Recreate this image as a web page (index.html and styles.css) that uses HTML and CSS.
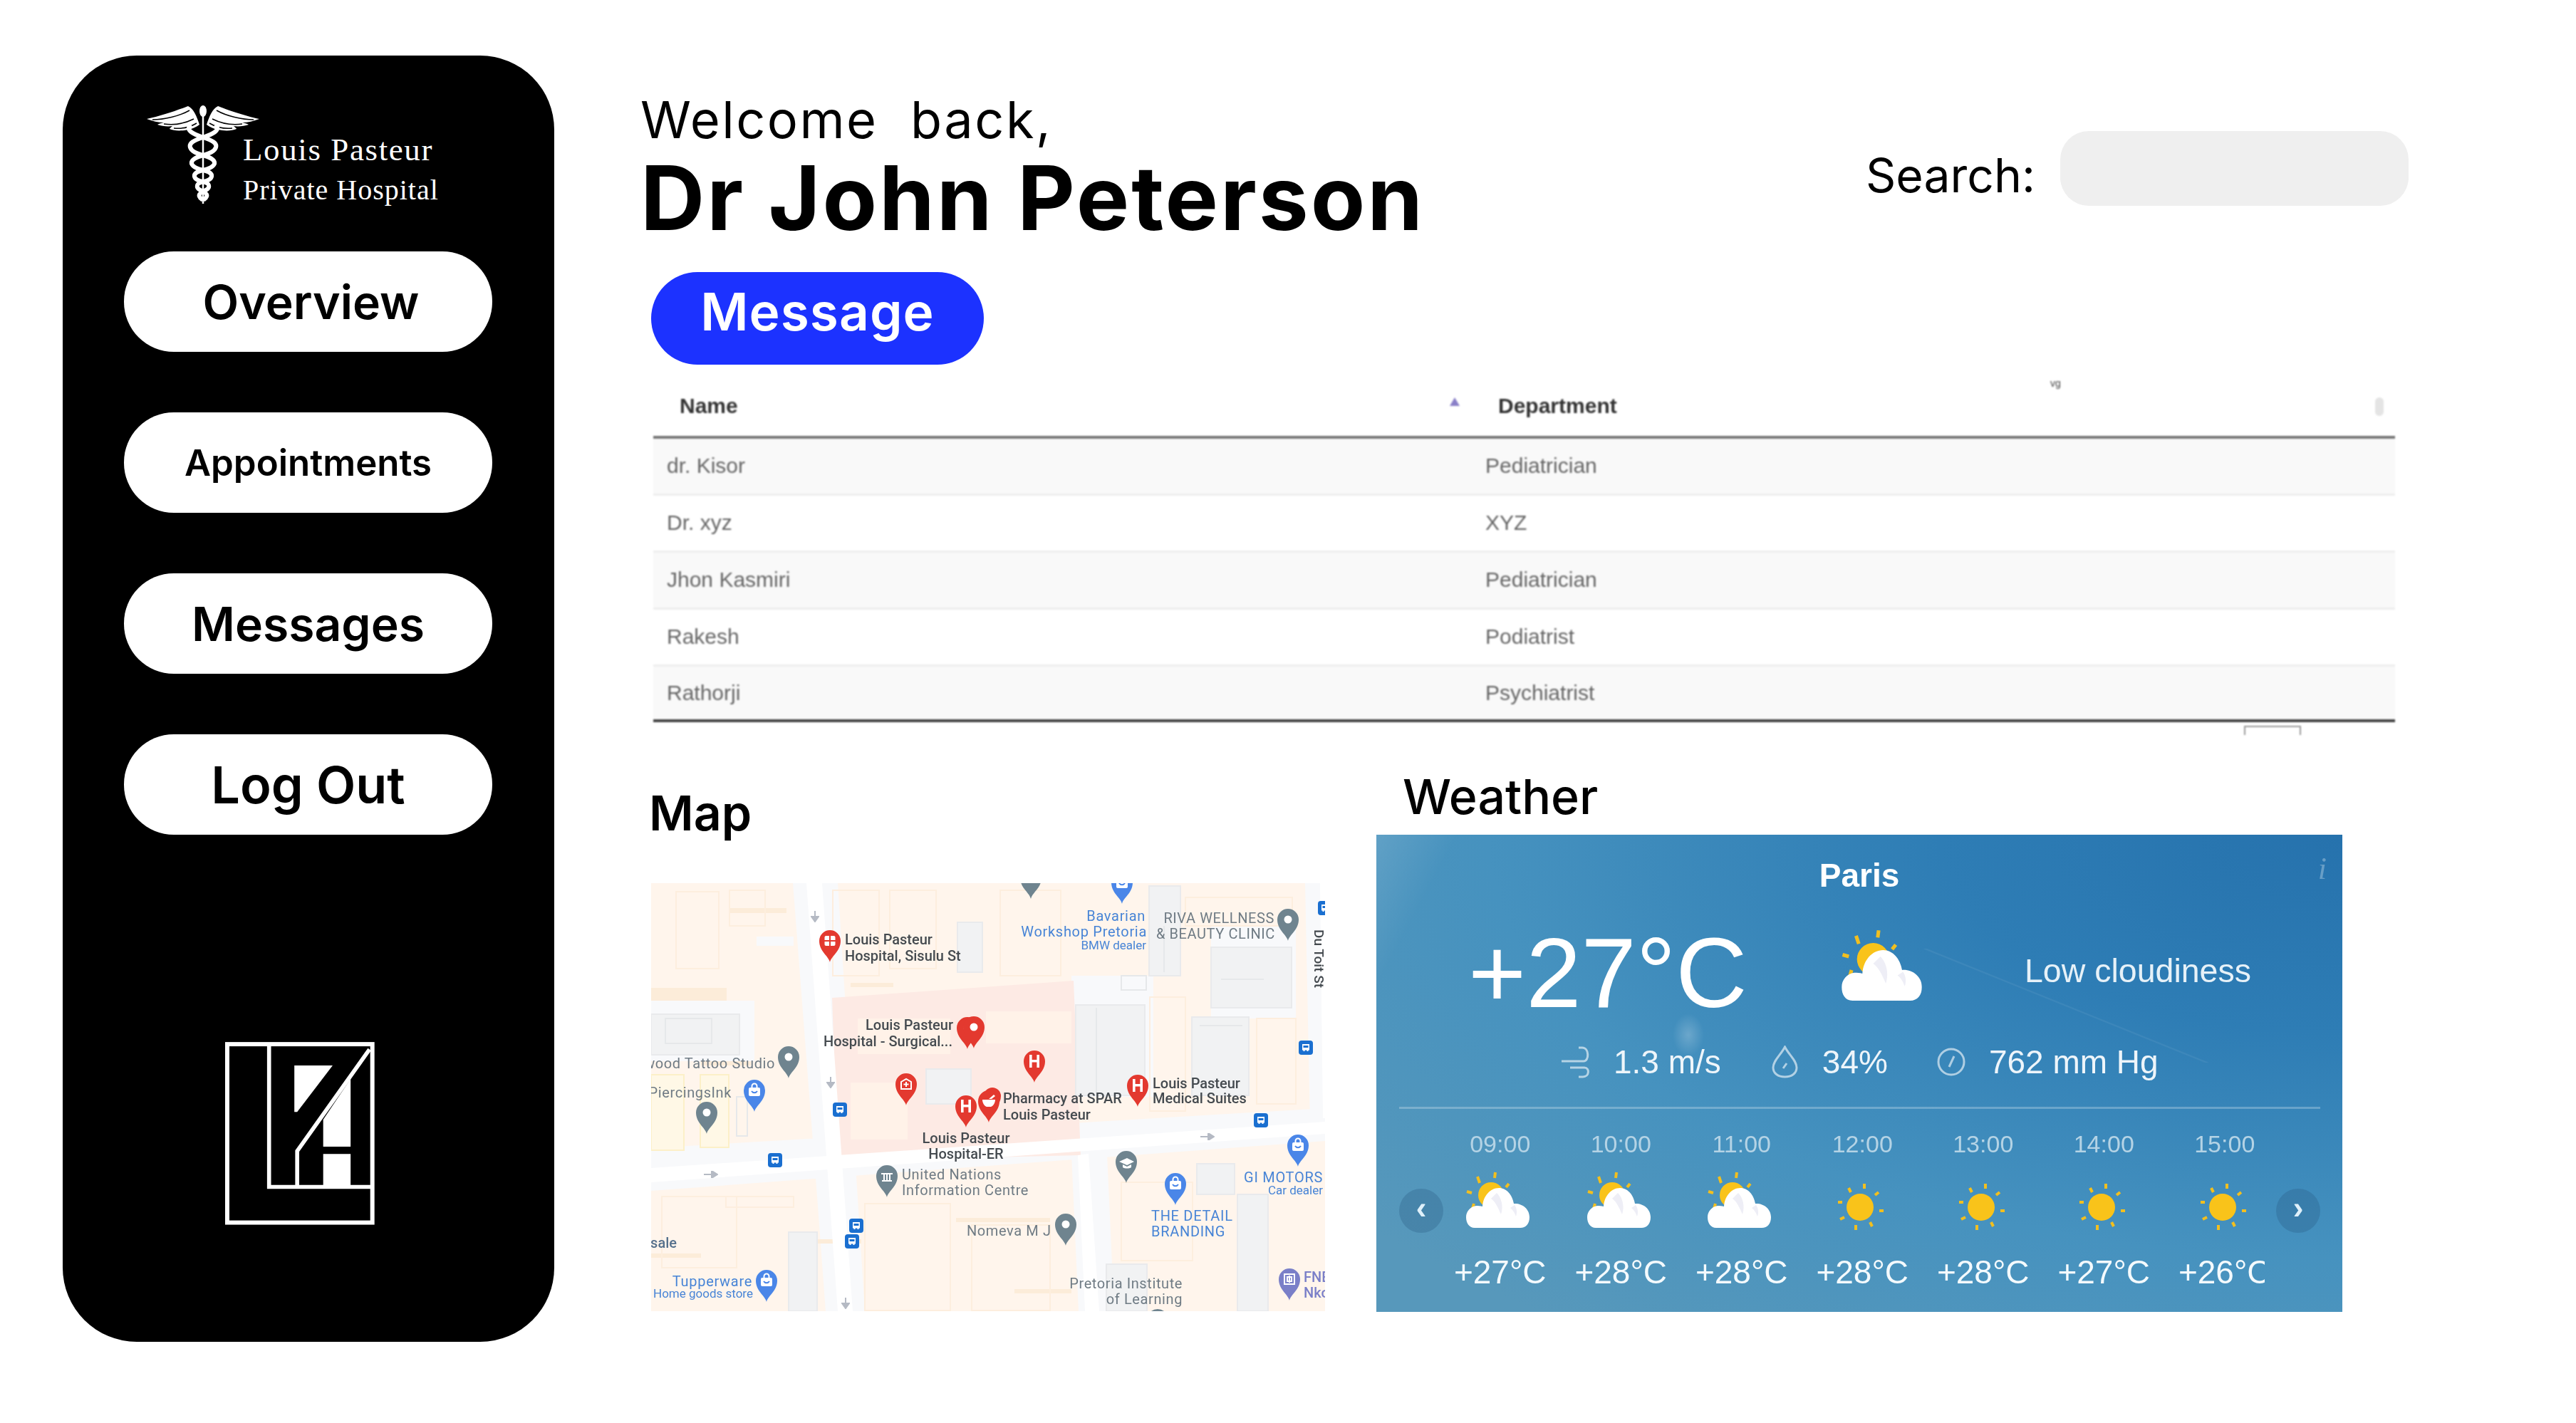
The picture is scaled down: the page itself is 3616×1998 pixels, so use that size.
FILE: index.html
```html
<!DOCTYPE html>
<html lang="en">
<head>
<meta charset="utf-8">
<title>Louis Pasteur Private Hospital</title>
<link rel="stylesheet" href="styles.css">
</head>
<body>
<svg class="defs" width="0" height="0" aria-hidden="true">
  <defs>
    <path id="drop-shape" d="M15 45C13 36 0 30 0 15A15 15 0 0 1 30 15C30 30 17 36 15 45Z"/>
    <symbol id="pin-dot" viewBox="0 0 30 45"><use href="#drop-shape"/><circle class="gw" cx="15" cy="15" r="5.5"/></symbol>
    <symbol id="pin-h" viewBox="0 0 30 45"><use href="#drop-shape"/><path class="gw" d="M8 6h3.6v7h6.8V6H22v18h-3.6v-7.6h-6.8V24H8z"/></symbol>
    <symbol id="pin-hosp" viewBox="0 0 30 45"><use href="#drop-shape"/><rect class="gw" x="7.500" y="8" width="15" height="14" rx="2"/><path class="gl" d="M7 15h16M15 8v14"/></symbol>
    <symbol id="pin-plus" viewBox="0 0 30 45"><use href="#drop-shape"/><path class="gl-w" d="M8 12l7-4 7 4v10H8zM15 12v7M11.500 15.500h7"/></symbol>
    <symbol id="pin-bag" viewBox="0 0 30 45"><use href="#drop-shape"/><rect class="gw" x="7" y="11" width="16" height="12" rx="2"/><path class="gl-w" d="M11.500 11V9a3.500 3.500 0 0 1 7 0v2"/><path class="gl" d="M11 16c2 3 6 3 8 0"/></symbol>
    <symbol id="pin-mortar" viewBox="0 0 30 45"><use href="#drop-shape"/><path class="gw" d="M6 13h18c0 5-3 9-6 10h-6c-3-1-6-5-6-10zM15 12l7-6 2 2-5 4z"/></symbol>
    <symbol id="pin-un" viewBox="0 0 30 45"><use href="#drop-shape"/><path class="gl-w" d="M7 12h16M8 22h14M11 13v8M19 13v8M15 13v8"/></symbol>
    <symbol id="pin-grad" viewBox="0 0 30 45"><use href="#drop-shape"/><path class="gw" d="M5 15l11-5 10 5-10 5zM10 19v4c3 2 9 2 12 0v-4l-6 3z"/></symbol>
    <symbol id="pin-bank" viewBox="0 0 30 45"><use href="#drop-shape"/><path class="gl-w" d="M8 8h14v14H8zM12 12h6v6h-6zM15 10v10"/></symbol>
    <symbol id="bus" viewBox="0 0 20 20"><rect class="bus-bg" width="20" height="20" rx="4"/><path class="gw" d="M5 5h10v8.500h-1.500V15h-2v-1.500h-3V15h-2v-1.500H5zM6.500 7v3h7V7z"/></symbol>
    <symbol id="arrow-down" viewBox="0 0 12 16"><path class="arrow" d="M6 0v9M1 8h10L6 15z"/></symbol>
    <symbol id="arrow-right" viewBox="0 0 20 10"><path class="arrow" d="M0 5h12M11 0v10l8-5z"/></symbol>
    <symbol id="partly" viewBox="0 0 89 79">
      <g class="ray"><path d="M16 7l3 9M41 1l-1 8M60 17l-4 5M1 28l7 2M9 52l2-7"/></g>
      <circle class="sun" cx="35" cy="33" r="18"/>
      <path class="cloud" d="M12 79C4 79 0 72 0 64C0 56 6 49 14 48C17 48 20 48 23 49C24 34 34 23 46 23C57 23 65 33 67 45C78 44 89 52 89 64C89 73 84 79 76 79Z"/>
      <path class="cloud-shade" d="M43 30c6 6 10 18 6 30-4-9-8-18-14-22zM68 47c3 4 4 10 2 16-2-5-4-9-8-12z"/>
    </symbol>
    <symbol id="sunny" viewBox="0 0 68 69">
      <g class="ray"><path d="M39 2v7M17 8l3 6M59 14l-5 4M2 28h6M60 40h6M5 52l6-3M27 60v7M47 56l3 6"/></g>
      <circle class="sun" cx="33" cy="35" r="19"/>
    </symbol>
  </defs>
</svg>

<div class="page">
  <aside class="sidebar">
    <div class="brand">
      <svg class="caduceus" viewBox="0 0 160 140" aria-hidden="true">
        <g id="half-wing">
          <path class="wing" d="M74 28C70 16 66 6 58 2 48 6 20 16 0 20c8 3 16 5 24 5-4 1-8 2-9 3 6 2 14 3 21 2-2 2-4 3-4 4 6 3 18 3 26 1 6-1 12-4 16-7z"/>
          <path class="wing-line" d="M60 8C46 16 24 21 8 21M66 20C52 27 38 29 24 27M70 26C60 32 48 34 38 33"/>
        </g>
        <g transform="translate(158 0) scale(-1 1)">
          <use href="#half-wing"/>
        </g>
        <ellipse class="snake-fill" cx="79" cy="9" rx="5" ry="8"/>
        <path class="staff" d="M79 14V139"/>
        <g id="snake">
          <path class="snake" d="M62 28C52 36 68 42 79 46C92 50 99 54 97 60C95 66 88 68 79 71C68 74 62 78 63 83C65 88 72 90 79 92C88 94 92 97 91 101C90 105 85 107 79 108C72 110 70 112 71 116C72 119 76 120 79 122C84 124 85 127 84 129C83 132 80 133 79 134"/>
        </g>
        <g transform="translate(158 0) scale(-1 1)"><use href="#snake"/></g>
      </svg>
      <div class="brand-text">
        <div class="brand-line1">Louis Pasteur</div>
        <div class="brand-line2">Private Hospital</div>
      </div>
    </div>
    <nav class="nav">
      <a class="nav-btn nav-overview">Overview</a>
      <a class="nav-btn nav-appointments">Appointments</a>
      <a class="nav-btn nav-messages">Messages</a>
      <a class="nav-btn nav-logout">Log Out</a>
    </nav>
    <svg class="lp-mark" viewBox="167 184 633 774" aria-hidden="true">
      <rect class="lp-line" x="176" y="193" width="614" height="755"/>
      <path class="lp-line lp-thin" d="M353 193V797H790"/>
      <path class="lp-line lp-thin" d="M778 215L472 645V797"/>
      <path class="lp-fill" d="M460 283H622L472 480H460Z"/>
      <path class="lp-fill" d="M582 512L698 340V627H582ZM582 658H698V797H582Z"/>
    </svg>
  </aside>

  <main class="content">
    <header class="head">
      <div class="greet">
        <div class="welcome">Welcome&nbsp; back,</div>
        <h1 class="doctor">Dr John Peterson</h1>
      </div>
      <div class="search">
        <label class="search-label">Search:</label>
        <div class="search-box"></div>
      </div>
    </header>
    <button class="msg-btn">Message</button>

    <div class="table-wrap">
      <span class="stray">vg</span>
      <table class="doctors">
        <colgroup><col class="col-name"><col class="col-dept"></colgroup>
        <thead>
          <tr><th class="th-name">Name<span class="sort-up"></span></th><th class="th-dept">Department<span class="sort-both"></span></th></tr>
        </thead>
        <tbody>
          <tr><td>dr. Kisor</td><td>Pediatrician</td></tr>
          <tr><td>Dr. xyz</td><td>XYZ</td></tr>
          <tr><td>Jhon Kasmiri</td><td>Pediatrician</td></tr>
          <tr><td>Rakesh</td><td>Podiatrist</td></tr>
          <tr><td>Rathorji</td><td>Psychiatrist</td></tr>
        </tbody>
      </table>
      <div class="pager"><span class="pager-box"></span></div>
    </div>

    <section class="lower">
      <div class="map-col">
        <h2 class="section-title map-title">Map</h2>
        <svg class="map" viewBox="0 0 946 601" role="img" aria-label="Map">
          <rect class="m-base" width="946" height="601"/>
          <!-- pavements -->
          <path class="m-walk" d="M199 0H262L300 601H245L233 440 199 0ZM590 380H640L650 601H600ZM918 0H946V340H925ZM0 372L946 316V362L0 432ZM590 130H705V300H590ZM786 60H905V190H786ZM0 165H145V250H0ZM148 75H200V88H148Z"/>
          <path class="m-accent" d="M0 147H106V165H0ZM110 35H190V42H110ZM280 140H340V146H280ZM0 520H70V526H0ZM410 380H470V386H410ZM220 500H295V506H220ZM428 470H560V476H428ZM70 250H140V256H70ZM510 570H590V576H510Z"/>
          <path class="m-lines" d="M35 12H95V120H35ZM110 10H160V60H110ZM255 10H320V130H255ZM335 10H400V120H335ZM490 10H575V130H490ZM15 440H120V540H15ZM105 440H200V455H105ZM300 450H420V600H300ZM450 480H560V600H450ZM660 420H760V530H660ZM750 20H900V60H750ZM700 160H750V320H700ZM850 190H905V310H850ZM290 360H410V370H290Z"/>
          <path class="m-yellow" d="M0 269H46V375H0ZM69 269H109V371H69Z"/>
          <!-- hospital grounds -->
          <path class="m-hosp" d="M254 161L593 137 603 382 262 390Z"/>
          <path class="m-hosp-in" d="M290 190H420V240H290ZM470 180H590V225H470ZM280 280H360V360H280Z"/>
          <!-- buildings -->
          <path class="m-bld" d="M596 171H693V298H596ZM759 188H839V298H759ZM699 4H743V130H699ZM786 90H899V175H786ZM0 184H124V241H0ZM386 261H449V310H386ZM823 437H866V601H823ZM639 535H696V601H639ZM766 394H819V437H766ZM193 490H233V601H193ZM430 55H465V125H430Z"/>
          <path class="m-bld-line" d="M20 190H85V225H20ZM625 175V295M770 200H830M720 60V125M120 300H135V355H120ZM800 135H860M660 130H695V150H660Z"/>
          <!-- roads -->
          <path class="m-road" d="M218 0H240L283 601H262ZM599 382L614 380 629 601H609ZM939 0H946V330H943ZM0 400L946 335V352L0 420Z"/>
          <!-- arrows -->
          <use href="#arrow-down" x="224" y="39" width="12" height="16"/>
          <use href="#arrow-down" x="246" y="272" width="12" height="16"/>
          <use href="#arrow-down" x="267" y="582" width="12" height="16"/>
          <use href="#arrow-right" x="74" y="404" width="20" height="10"/>
          <use href="#arrow-right" x="771" y="351" width="20" height="10"/>
          <!-- transit -->
          <use href="#bus" x="255" y="308" width="20" height="20"/>
          <use href="#bus" x="164" y="379" width="20" height="20"/>
          <use href="#bus" x="278" y="471" width="20" height="20"/>
          <use href="#bus" x="272" y="493" width="20" height="20"/>
          <use href="#bus" x="909" y="221" width="20" height="20"/>
          <use href="#bus" x="846" y="323" width="20" height="20"/>
          <use href="#bus" x="936" y="25" width="20" height="20"/>
          <!-- pins -->
          <g class="p-red">
            <use href="#pin-hosp" x="236" y="66" width="30" height="45"/>
            <use href="#pin-dot" x="429" y="188" width="30" height="45"/>
            <use href="#pin-dot" x="438" y="187" width="30" height="45"/>
            <use href="#pin-plus" x="343" y="267" width="30" height="45"/>
            <use href="#pin-dot" x="467" y="287" width="24" height="36"/>
            <use href="#pin-h" x="427" y="298" width="30" height="45"/>
            <use href="#pin-mortar" x="459" y="291" width="30" height="45"/>
            <use href="#pin-h" x="523" y="235" width="30" height="45"/>
            <use href="#pin-h" x="668" y="269" width="30" height="45"/>
          </g>
          <g class="p-gray">
            <use href="#pin-dot" x="178" y="229" width="30" height="45"/>
            <use href="#pin-dot" x="63" y="307" width="30" height="45"/>
            <use href="#pin-un" x="316" y="396" width="30" height="45"/>
            <use href="#pin-dot" x="518" y="-23" width="30" height="45"/>
            <use href="#pin-dot" x="879" y="36" width="30" height="45"/>
            <use href="#pin-grad" x="652" y="376" width="30" height="45"/>
            <use href="#pin-dot" x="567" y="464" width="30" height="45"/>
            <use href="#pin-dot" x="696" y="598" width="30" height="45"/>
          </g>
          <g class="p-blue">
            <use href="#pin-bag" x="130" y="276" width="30" height="45"/>
            <use href="#pin-bag" x="147" y="543" width="30" height="45"/>
            <use href="#pin-bag" x="646" y="-16" width="30" height="45"/>
            <use href="#pin-bag" x="721" y="407" width="30" height="45"/>
            <use href="#pin-bag" x="893" y="353" width="30" height="45"/>
          </g>
          <g class="p-purple"><use href="#pin-bank" x="881" y="541" width="30" height="45"/></g>
          <!-- labels -->
          <text class="ml ml-dark" x="272" y="86">Louis Pasteur</text>
          <text class="ml ml-dark" x="272" y="109">Hospital, Sisulu St</text>
          <text class="ml ml-dark ml-end" x="424" y="206">Louis Pasteur</text>
          <text class="ml ml-dark ml-end" x="423" y="229">Hospital -  Surgical...</text>
          <text class="ml ml-gray ml-end" x="174" y="260">Hollywood Tattoo Studio</text>
          <text class="ml ml-gray ml-end" x="113" y="301">PiercingsInk</text>
          <text class="ml ml-slate ml-end" x="36" y="512">Wholesale</text>
          <text class="ml ml-blue ml-end" x="142" y="566">Tupperware</text>
          <text class="ml ml-blue ml-small ml-end" x="143" y="582">Home goods store</text>
          <text class="ml ml-dark ml-mid" x="442" y="365">Louis Pasteur</text>
          <text class="ml ml-dark ml-mid" x="442" y="387">Hospital-ER</text>
          <text class="ml ml-gray" x="352" y="416">United Nations</text>
          <text class="ml ml-gray" x="352" y="438">Information Centre</text>
          <text class="ml ml-gray" x="443" y="495">Nomeva M J</text>
          <text class="ml ml-blue ml-end" x="694" y="53">Bavarian</text>
          <text class="ml ml-blue ml-end" x="696" y="75">Workshop Pretoria</text>
          <text class="ml ml-blue ml-small ml-end" x="695" y="93">BMW dealer</text>
          <text class="ml ml-gray ml-end" x="875" y="56">RIVA WELLNESS</text>
          <text class="ml ml-gray ml-end" x="876" y="78">&amp; BEAUTY CLINIC</text>
          <text class="ml ml-dark ml-rot" transform="translate(931 65) rotate(90)">Du Toit St</text>
          <text class="ml ml-dark" x="494" y="309">Pharmacy at SPAR</text>
          <text class="ml ml-dark" x="494" y="332">Louis Pasteur</text>
          <text class="ml ml-dark" x="704" y="288">Louis Pasteur</text>
          <text class="ml ml-dark" x="704" y="309">Medical Suites</text>
          <text class="ml ml-blue ml-end" x="943" y="420">GI MOTORS</text>
          <text class="ml ml-blue ml-small ml-end" x="943" y="437">Car dealer</text>
          <text class="ml ml-blue" x="702" y="474">THE DETAIL</text>
          <text class="ml ml-blue" x="702" y="496">BRANDING</text>
          <text class="ml ml-gray ml-end" x="746" y="569">Pretoria Institute</text>
          <text class="ml ml-gray ml-end" x="746" y="591">of Learning</text>
          <text class="ml ml-purple" x="916" y="560">FNB</text>
          <text class="ml ml-purple" x="916" y="582">Nkomo</text>
        </svg>
      </div>

      <div class="weather-col">
        <h2 class="section-title weather-title">Weather</h2>
        <div class="weather">
          <span class="w-info">i</span>
          <div class="w-city">Paris</div>
          <div class="w-main">
            <div class="w-temp">+27°C</div>
            <svg class="w-main-icon" viewBox="0 0 89 79"><use href="#partly"/></svg>
            <div class="w-desc">Low cloudiness</div>
          </div>
          <div class="w-details">
            <svg class="w-ico w-ico-wind" viewBox="0 0 42 46"><path d="M1 22H32C40 22 40 3 30 3H25M13 31H33C41 31 40 44 31 44H25"/></svg>
            <span class="w-val w-wind">1.3 m/s</span>
            <svg class="w-ico w-ico-drop" viewBox="0 0 37 46"><path d="M18.500 2C13 13 2 21 2 31C2 39 9 44 18.500 44C28 44 35 39 35 31C35 21 24 13 18.500 2Z"/><path d="M16 32L21 25"/></svg>
            <span class="w-val w-hum">34%</span>
            <svg class="w-ico w-ico-gauge" viewBox="0 0 40 40"><circle cx="20" cy="20" r="18"/><path d="M17 27L24 12"/></svg>
            <span class="w-val">762 mm Hg</span>
          </div>
          <div class="w-rule"></div>
          <div class="w-forecast">
            <button class="w-nav">‹</button>
            <div class="w-strip">
              <div class="w-hour"><span class="w-time">09:00</span><svg class="w-sm-cloud" viewBox="0 0 89 79"><use href="#partly"/></svg><span class="w-t">+27°C</span></div>
              <div class="w-hour"><span class="w-time">10:00</span><svg class="w-sm-cloud" viewBox="0 0 89 79"><use href="#partly"/></svg><span class="w-t">+28°C</span></div>
              <div class="w-hour"><span class="w-time">11:00</span><svg class="w-sm-cloud" viewBox="0 0 89 79"><use href="#partly"/></svg><span class="w-t">+28°C</span></div>
              <div class="w-hour"><span class="w-time">12:00</span><svg class="w-sm-sun" viewBox="0 0 68 69"><use href="#sunny"/></svg><span class="w-t">+28°C</span></div>
              <div class="w-hour"><span class="w-time">13:00</span><svg class="w-sm-sun" viewBox="0 0 68 69"><use href="#sunny"/></svg><span class="w-t">+28°C</span></div>
              <div class="w-hour"><span class="w-time">14:00</span><svg class="w-sm-sun" viewBox="0 0 68 69"><use href="#sunny"/></svg><span class="w-t">+27°C</span></div>
              <div class="w-hour"><span class="w-time">15:00</span><svg class="w-sm-sun" viewBox="0 0 68 69"><use href="#sunny"/></svg><span class="w-t">+26°C</span></div>
            </div>
            <button class="w-nav w-nav-next">›</button>
          </div>
        </div>
      </div>
    </section>
  </main>
</div>
</body>
</html>
```
FILE: styles.css
```css
* { box-sizing: border-box; }
html, body { margin: 0; padding: 0; background: #fff; }
body { width: 3616px; height: 1998px; overflow: hidden; font-family: "Inter", "Liberation Sans", sans-serif; color: #000; }
.defs { position: absolute; }

.page { display: flex; align-items: flex-start; padding: 78px 0 0 88px; height: 1998px; }

/* Sidebar */
.sidebar { flex: none; width: 690px; height: 1806px; background: #000; border-radius: 104px; display: flex; flex-direction: column; padding-top: 70px; }
.brand { display: flex; align-items: flex-end; margin-left: 118px; height: 139px; color: #fff; }
.caduceus { flex: none; width: 160px; height: 140px; }
.wing { fill: #fff; }
.wing-line { fill: none; stroke: #000; stroke-width: 1.5; }
.staff { stroke: #fff; stroke-width: 2.500; }
.snake { fill: none; stroke: #fff; stroke-width: 6; }
.snake-fill { fill: #fff; }
.brand-text { margin: 0 0 -9px -25px; font-family: "Liberation Serif", serif; }
.brand-line1 { font-size: 45px; line-height: 56px; letter-spacing: 1.6px; }
.brand-line2 { font-size: 40px; line-height: 58px; letter-spacing: 1px; white-space: nowrap; }

.nav { display: flex; flex-direction: column; gap: 85px; margin: 66px 0 0 86px; width: 517px; }
.nav-btn { display: flex; align-items: center; justify-content: center; height: 141px; border-radius: 70px; background: #fff; color: #000; font-weight: 600; }
.nav-overview { font-size: 66px; padding-left: 8px; }
.nav-appointments { font-size: 51px; }
.nav-messages { font-size: 66px; }
.nav-logout { font-size: 72px; }

.lp-mark { flex: none; width: 210px; height: 257px; margin: 291px 0 0 228px; }
.lp-line { fill: none; stroke: #fff; stroke-width: 18; }
.lp-thin { stroke-width: 17; }
.lp-fill { fill: #fff; }

/* Main column */
.content { flex: none; width: 2482px; margin-left: 121px; padding-top: 50px; }
.head { display: flex; justify-content: space-between; align-items: center; }
.welcome { font-size: 72px; line-height: 80px; font-weight: 400; white-space: nowrap; letter-spacing: 2.500px; }
.doctor { margin: 5px 0 0; font-size: 125px; line-height: 130px; font-weight: 700; white-space: nowrap; letter-spacing: 2.900px; }
.search { display: flex; align-items: center; gap: 35px; margin-top: 2px; }
.search-label { font-size: 66px; line-height: 80px; margin-top: 18px; }
.search-box { width: 489px; height: 105px; border-radius: 40px; background: #efefef; }

.msg-btn { display: block; width: 467px; height: 130px; margin: 39px 0 0 15px; padding: 0 0 20px; border: 0; border-radius: 65px; background: #1c32ff; color: #fff; font-family: inherit; font-size: 73px; font-weight: 600; letter-spacing: 1px; }

/* Table */
.table-wrap { position: relative; margin: 20px 0 0 18px; width: 2445px; filter: blur(0.8px); }
.stray { position: absolute; top: -2px; left: 1961px; font: 14px "Liberation Sans", sans-serif; color: #444; }
.doctors { width: 2445px; table-layout: fixed; border-collapse: collapse; font-family: "Liberation Sans", sans-serif; font-size: 30px; color: #666; border-bottom: 4px solid #444; }
.col-name { width: 1149px; }
.doctors th { position: relative; height: 82px; padding: 0 0 4px 37px; text-align: left; font-weight: 700; color: #333; border-bottom: 4px solid #777; }
.doctors td { height: 80px; padding: 0 0 0 19px; border-bottom: 3px solid #eee; }
.doctors tbody tr:nth-child(odd) td { background: #f9f9f9; }
.doctors tbody tr:last-child td { border-bottom: 0; height: 78px; }
.sort-up { position: absolute; right: 17px; top: 26px; width: 0; height: 0; border-left: 7px solid transparent; border-right: 7px solid transparent; border-bottom: 12px solid #8a80c8; }
.sort-both { position: absolute; right: 16px; top: 26px; width: 12px; height: 26px; border-radius: 6px; background: #e4e4e4; }
.pager { height: 18px; display: flex; justify-content: flex-end; padding: 5px 132px 0 0; }
.pager-box { width: 80px; height: 13px; border: 2px solid #999; border-bottom: 0; }

/* Lower section */
.lower { display: flex; align-items: flex-start; margin-top: 46px; }
.section-title { margin: 0; font-size: 68px; line-height: 80px; font-weight: 600; white-space: nowrap; }
.map-col { flex: none; margin-left: 15px; padding-top: 23px; }
.map-title { margin-left: -3px; }
.map { display: block; width: 946px; height: 601px; margin-top: 59px; filter: blur(0.6px); }
.weather-col { flex: none; margin-left: 72px; }
.weather-title { margin-left: 37px; font-weight: 500; }

/* Map */
.m-base { fill: #fff5ec; }
.m-walk { fill: #f8f9fb; }
.m-accent { fill: #fcecd9; }
.m-lines { fill: none; stroke: #fdeede; stroke-width: 2; }
.m-yellow { fill: #fff8e6; stroke: #fcf0c8; stroke-width: 2; }
.m-hosp { fill: #fdeae4; }
.m-hosp-in { fill: #fff2e8; }
.m-bld { fill: #f1f2f3; stroke: #e9eaec; stroke-width: 2; }
.m-bld-line { fill: none; stroke: #e6e8ea; stroke-width: 2; }
.m-road { fill: #fff; }
.arrow { fill: #b5bac4; stroke: #b5bac4; stroke-width: 2; }
.bus-bg { fill: #1a6fd0; }
.gw { fill: #fff; }
.gl { fill: none; stroke: currentColor; stroke-width: 2; }
.gl-w { fill: none; stroke: #fff; stroke-width: 2; }
.p-red { fill: #e3392f; color: #e3392f; }
.p-gray { fill: #6f848f; color: #6f848f; }
.p-blue { fill: #4a86e8; color: #4a86e8; }
.p-purple { fill: #7a7fc8; color: #7a7fc8; }
.ml { font-family: "Roboto", "Liberation Sans", sans-serif; font-size: 20px; font-weight: 500; }
.ml-end { text-anchor: end; }
.ml-mid { text-anchor: middle; }
.ml-dark { fill: #444a4f; }
.ml-gray { fill: #6f7b84; font-weight: 400; letter-spacing: .6px; }
.ml-slate { fill: #55708c; }
.ml-blue { fill: #4784d6; font-weight: 400; letter-spacing: .7px; }
.ml-purple { fill: #7a7fc8; }
.ml-rot { font-size: 19px; }
.ml-small { font-size: 17px; font-weight: 400; letter-spacing: 0; }

/* Weather icons */
.ray { fill: none; stroke: #f2bf1f; stroke-width: 4; }
.sun { fill: #f9c31a; }
.cloud { fill: #fff; }
.cloud-shade { fill: #eeeef6; }

/* Weather */
.weather { position: relative; width: 1356px; height: 670px; margin-top: 14px; padding-top: 32px; color: #fff; font-family: "Liberation Sans", sans-serif; overflow: hidden; filter: blur(0.5px);
  background:
    radial-gradient(ellipse 22px 30px at 438px 281px, rgba(255,255,255,.22), rgba(255,255,255,0)) no-repeat,
    linear-gradient(22deg, rgba(255,255,255,0) 49.400%, rgba(255,255,255,.07) 50%, rgba(255,255,255,0) 50.600%) 768px 160px / 400px 160px no-repeat,
    linear-gradient(118deg, rgba(255,255,255,.12), rgba(255,255,255,0) 22%) 0 0 / 340px 340px no-repeat,
    radial-gradient(ellipse 130% 130% at 100% 0%, #2672ad 0%, #2e7db5 32%, #4692bf 68%, #5798bb 100%);
}
.w-info { position: absolute; top: 22px; right: 22px; font: italic 44px "Liberation Serif", serif; color: rgba(255,255,255,.3); }
.w-city { text-align: center; font-size: 46px; line-height: 50px; font-weight: 700; }
.w-main { display: flex; align-items: flex-start; margin: 44px 0 0 129px; }
.w-temp { width: 524px; font-size: 139px; line-height: 136px; white-space: nowrap; }
.w-main-icon { flex: none; width: 113px; height: 100px; margin-top: 7px; }
.w-desc { margin: 38px 0 0 144px; font-size: 46.500px; line-height: 54px; color: #e6f1f8; white-space: nowrap; }
.w-details { display: flex; align-items: center; height: 50px; margin: 32px 0 0 259px; }
.w-val { font-size: 46px; line-height: 50px; color: #eef5fa; white-space: nowrap; }
.w-ico { flex: none; fill: none; stroke: rgba(255,255,255,.6); stroke-width: 3; }
.w-ico-wind { width: 42px; height: 46px; margin-right: 32px; }
.w-ico-drop { width: 37px; height: 46px; margin: 0 34px 0 71px; }
.w-ico-gauge { width: 40px; height: 40px; margin: 0 33px 0 69px; }
.w-rule { height: 3px; margin: 38px 31px 0 32px; background: rgba(255,255,255,.25); }
.w-forecast { display: flex; align-items: center; margin: 29px 0 0 32px; }
.w-nav { flex: none; width: 62px; height: 62px; margin-top: 3px; padding: 0 0 8px; border: 0; border-radius: 50%; background: rgba(40,90,130,.3); color: #dff0fa; font: 700 44px "Liberation Sans", sans-serif; line-height: 54px; }
.w-nav-next { margin-left: 16px; }
.w-strip { flex: none; display: flex; width: 1158px; margin-left: -5px; overflow: hidden; }
.w-hour { flex: 0 0 169.500px; display: flex; flex-direction: column; align-items: center; }
.w-time { font-size: 34px; line-height: 40px; color: #b4d3e5; }
.w-sm-cloud { display: block; width: 89px; height: 79px; margin: 19px 0 8px -6px; }
.w-sm-sun { display: block; width: 68px; height: 69px; margin: 34px 0 3px -4px; }
.w-t { margin-top: 29px; font-size: 46px; line-height: 50px; white-space: nowrap; color: #f4fafd; }
```
